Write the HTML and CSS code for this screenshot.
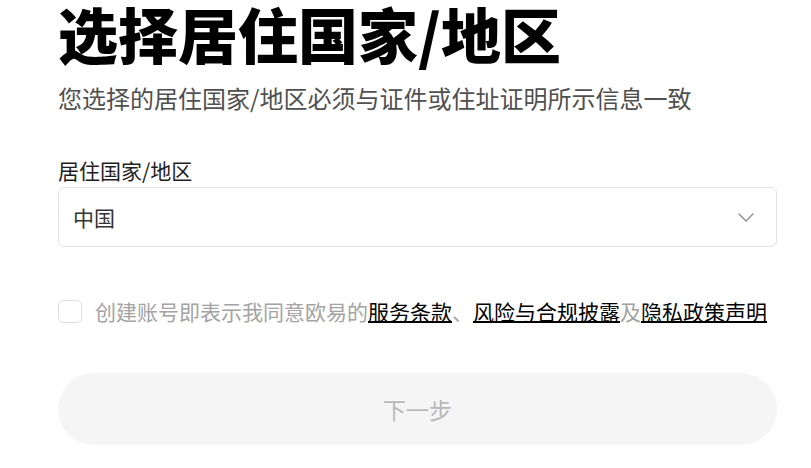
FILE: index.html
```html
<!DOCTYPE html>
<html lang="zh-CN">
<head>
<meta charset="utf-8">
<title>选择居住国家/地区</title>
<link rel="stylesheet" href="styles.css">
</head>
<body>
<main class="page">
  <h1 class="title">选择居住国家/地区</h1>
  <p class="subtitle">您选择的居住国家/地区必须与证件或住址证明所示信息一致</p>

  <div class="field">
    <label class="field-label">居住国家/地区</label>
    <div class="select">
      <span class="select-value">中国</span>
      <svg class="chevron" width="16" height="9" viewBox="0 0 16 9" aria-hidden="true">
        <path d="M1 1 L8 8 L15 1" fill="none" stroke="#8a8a8a" stroke-width="1.3" stroke-linecap="round" stroke-linejoin="round"/>
      </svg>
    </div>
  </div>

  <div class="agree">
    <span class="checkbox"></span>
    <p class="agree-text">创建账号即表示我同意欧易的<a class="link" href="#">服务条款</a>、<a class="link" href="#">风险与合规披露</a>及<a class="link" href="#">隐私政策声明</a></p>
  </div>

  <button class="next" type="button">下一步</button>
</main>
</body>
</html>
```

FILE: styles.css
```css
html, body {
  margin: 0;
  padding: 0;
  background: #ffffff;
}

body {
  font-family: "Noto Sans CJK SC", "Noto Sans", sans-serif;
  color: #000;
}

.page {
  width: 719px;
  padding: 0 0 0 58px;
  display: flex;
  flex-direction: column;
}

.title {
  margin: 0;
  font-size: 60px;
  line-height: 66px;
  font-weight: 900;
  color: #000;
  letter-spacing: 0;
}

.subtitle {
  margin: 14px 0 0;
  font-size: 24px;
  line-height: 36px;
  color: #505050;
}

.field {
  margin-top: 40px;
  display: flex;
  flex-direction: column;
}

.field-label {
  font-size: 21px;
  line-height: 28px;
  color: #1e1e1e;
  margin-bottom: 3px;
}

.select {
  box-sizing: border-box;
  height: 60px;
  border: 1px solid #e2e2e2;
  border-radius: 6px;
  display: flex;
  align-items: center;
  justify-content: space-between;
  padding: 0 22px 0 14px;
}

.select-value {
  font-size: 21px;
  color: #333;
}

.chevron {
  display: block;
}

.agree {
  margin-top: 49px;
  height: 30px;
  display: flex;
  align-items: center;
  gap: 13px;
}

.checkbox {
  box-sizing: border-box;
  width: 24px;
  height: 23px;
  border: 1px solid #dedede;
  border-radius: 5px;
  flex: none;
}

.agree-text {
  margin: 0;
  font-size: 21px;
  line-height: 30px;
  color: #a3a3a3;
  white-space: nowrap;
}

.link {
  color: #000;
  text-decoration: underline;
  text-decoration-thickness: 2px;
  text-underline-offset: 1px;
}

.next {
  margin-top: 47px;
  height: 72px;
  border: none;
  border-radius: 36px;
  background: #f5f5f5;
  color: #b8b8b8;
  font-family: "Noto Sans CJK SC", "Noto Sans", sans-serif;
  font-size: 23px;
  padding: 0;
}
```
